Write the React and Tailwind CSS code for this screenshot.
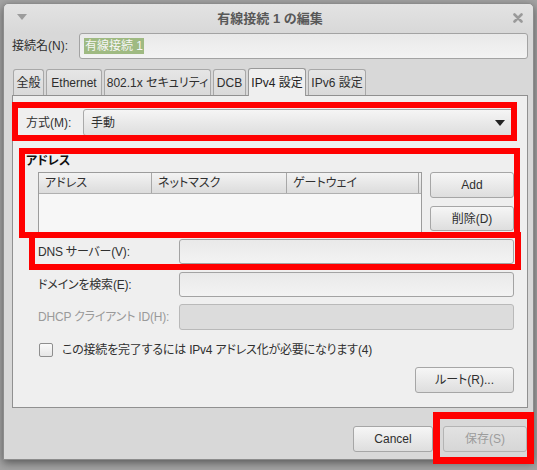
import { useState } from 'react'

const font = { fontFamily: '"Liberation Sans", "Noto Sans CJK JP", sans-serif' }

// gtk-ish push button
function Button({ children, className = '', disabled = false }) {
    return (
        <div
            className={`flex items-center justify-center whitespace-nowrap rounded-[3px] border text-[12px] ${
                disabled
                    ? 'border-[#b4b4b4] bg-gradient-to-b from-[#e2e2e2] to-[#d6d6d6] text-[#9c9c9c]'
                    : 'border-[#a6a6a6] bg-gradient-to-b from-[#f6f6f6] to-[#dedede] text-[#2e2e2e]'
            } ${className}`}
        >
            {children}
        </div>
    )
}

function Entry({ disabled = false, className = '', children }) {
    return (
        <div
            className={`flex items-center rounded-[3px] border ${
                disabled
                    ? 'border-[#b9b9b9] bg-[#dcdcdc]'
                    : 'border-[#a3a3a3] bg-gradient-to-b from-[#e9e9e9] to-[#f3f3f3]'
            } ${className}`}
        >
            {children}
        </div>
    )
}

function FieldRow({ label, disabled, className = '' }) {
    return (
        <div className={`flex items-center pl-[25px] ${className}`}>
            <span className={`w-[141px] whitespace-nowrap tracking-[-0.2px] ${disabled ? 'text-[#9a9a9a]' : 'text-[#303030]'}`}>{label}</span>
            <Entry disabled={disabled} className="h-full flex-1" />
        </div>
    )
}

const tabs = [
    { name: '全般', w: 'w-[31px]' },
    { name: 'Ethernet', w: 'w-[56px]' },
    { name: '802.1x セキュリティ', w: 'w-[107px]' },
    { name: 'DCB', w: 'w-[33px]' },
    { name: 'IPv4 設定', w: 'w-[58px]' },
    { name: 'IPv6 設定', w: 'w-[58px]' },
]

export default function App() {
    const [active] = useState('IPv4 設定')

    return (
        <div
            className="relative h-[470px] w-[537px] overflow-hidden bg-[#a3a3a3] text-[12px] text-[#303030] [font-feature-settings:'palt']"
            style={font}
        >
            {/* dialog window */}
            <div className="ml-[3px] mt-[3px] flex h-[457px] w-[531px] flex-col rounded-t-[5px] border border-[#8c8c8c] bg-[#d8d8d8] shadow-[0_3px_8px_rgba(0,0,0,0.45)]">
                {/* title bar */}
                <div className="flex h-[29px] items-center rounded-t-[5px] bg-gradient-to-b from-[#e3e3e3] to-[#d8d8d8] pl-[13px] pr-[10px]">
                    <svg width="10" height="6" viewBox="0 0 10 6" className="mb-[4px]">
                        <path d="M0 0h10L5 6z" fill="#9c9c9c" />
                    </svg>
                    <div className="flex-1 text-center text-[13px] font-bold text-[#585858] [font-feature-settings:normal]">有線接続 1 の編集</div>
                    <svg width="10" height="10" viewBox="0 0 10 10" className="mb-[2px]">
                        <path d="M1.5 1.5l7 7M8.5 1.5l-7 7" stroke="#9a9a9a" strokeWidth="2.6" strokeLinecap="round" />
                    </svg>
                </div>

                <div className="flex flex-1 flex-col pl-[8px] pr-[5px]">
                    {/* connection name */}
                    <div className="flex h-[26px] items-center">
                        <span className="w-[67px] whitespace-nowrap">接続名(N):</span>
                        <Entry className="h-full flex-1 pl-[4px]">
                            <span className="bg-[#9fba82] px-[1px] leading-[16px] text-[#f6f6f6]">有線接続 1</span>
                        </Entry>
                    </div>

                    {/* notebook tabs */}
                    <div className="relative z-10 mt-[9px] flex h-[27px] items-end gap-[2px] pl-[1px]">
                        {tabs.map((t) =>
                            t.name === active ? (
                                <div
                                    key={t.name}
                                    className={`${t.w} -mb-px flex h-[28px] items-center justify-center whitespace-nowrap rounded-t-[3px] border border-b-0 border-[#999] bg-[#efefef] pt-[1px] text-[#222]`}
                                >
                                    {t.name}
                                </div>
                            ) : (
                                <div
                                    key={t.name}
                                    className={`${t.w} flex h-[26px] items-center justify-center whitespace-nowrap rounded-t-[3px] border border-b-0 border-[#a8a8a8] bg-gradient-to-b from-[#e6e6e6] to-[#d9d9d9] text-[#2e2e2e]`}
                                >
                                    {t.name}
                                </div>
                            )
                        )}
                    </div>

                    {/* IPv4 page */}
                    <div className="flex h-[313px] flex-col border border-[#909090] bg-[#efefef] pr-[13px]">
                        <div className="mt-[13px] flex h-[27px] items-center pl-[13px]">
                            <span className="w-[57px] whitespace-nowrap">方式(M):</span>
                            <div className="flex h-full flex-1 items-center rounded-[3px] border border-[#a9a9a9] bg-gradient-to-b from-[#f5f5f5] to-[#dedede] pl-[7px] pr-[8px]">
                                <span className="flex-1">手動</span>
                                <svg width="10" height="6" viewBox="0 0 10 6">
                                    <path d="M0 0h10L5 6z" fill="#222" />
                                </svg>
                            </div>
                        </div>

                        <div className="mt-[18px] pl-[13px] font-bold leading-[14px] text-[#111]">アドレス</div>

                        <div className="mt-[4px] flex gap-[8px] pl-[25px]">
                            <div className="flex h-[61px] w-[384px] flex-col border border-[#9c9c9c] bg-[#f7f7f7]">
                                <div className="flex h-[21px] border-b border-[#b0b0b0] bg-gradient-to-b from-[#f3f3f3] to-[#dcdcdc]">
                                    <div className="flex w-[113px] items-center border-r border-[#a8a8a8] pl-[6px]">アドレス</div>
                                    <div className="flex w-[135px] items-center border-r border-[#a8a8a8] pl-[6px]">ネットマスク</div>
                                    <div className="mr-[2px] flex flex-1 items-center border-r border-[#a8a8a8] pl-[6px]">ゲートウェイ</div>
                                </div>
                            </div>
                            <div className="flex flex-1 flex-col gap-[8px]">
                                <Button className="h-[26px]">Add</Button>
                                <Button className="h-[25px]">削除(D)</Button>
                            </div>
                        </div>

                        <FieldRow label="DNS サーバー(V):" className="mt-[6px] h-[25px]" />
                        <FieldRow label="ドメインを検索(E):" className="mt-[8px] h-[25px]" />
                        <FieldRow label="DHCP クライアント ID(H):" disabled className="mt-[7px] h-[26px]" />

                        <div className="mt-[12px] flex h-[15px] items-center pl-[26px]">
                            <div className="h-[14px] w-[14px] rounded-[2px] border border-[#8e8e8e] bg-gradient-to-b from-[#fafafa] to-[#e6e6e6]" />
                            <span className="ml-[9px] whitespace-nowrap tracking-[-0.2px]">この接続を完了するには IPv4 アドレス化が必要になります(4)</span>
                        </div>

                        <div className="mt-[10px] flex justify-end">
                            <Button className="h-[26px] w-[99px]">ルート(R)...</Button>
                        </div>
                    </div>

                    {/* dialog actions */}
                    <div className="mr-[1px] mt-[18px] flex justify-end gap-[10px]">
                        <Button className="h-[26px] w-[80px]">Cancel</Button>
                        <Button disabled className="h-[26px] w-[84px]">保存(S)</Button>
                    </div>
                </div>
            </div>

            {/* red highlight frames */}
            <div className="pointer-events-none absolute left-[12px] top-[102px] h-[39px] w-[505px] border-[6px] border-[#ff0000]" />
            <div className="pointer-events-none absolute left-[19px] top-[148px] h-[90px] w-[501px] border-[6px] border-[#ff0000]" />
            <div className="pointer-events-none absolute left-[29px] top-[232px] h-[38px] w-[492px] border-[6px] border-[#ff0000]" />
            <div className="pointer-events-none absolute left-[433px] top-[412px] h-[52px] w-[101px] border-[7px] border-[#ff0000]" />
        </div>
    )
}
